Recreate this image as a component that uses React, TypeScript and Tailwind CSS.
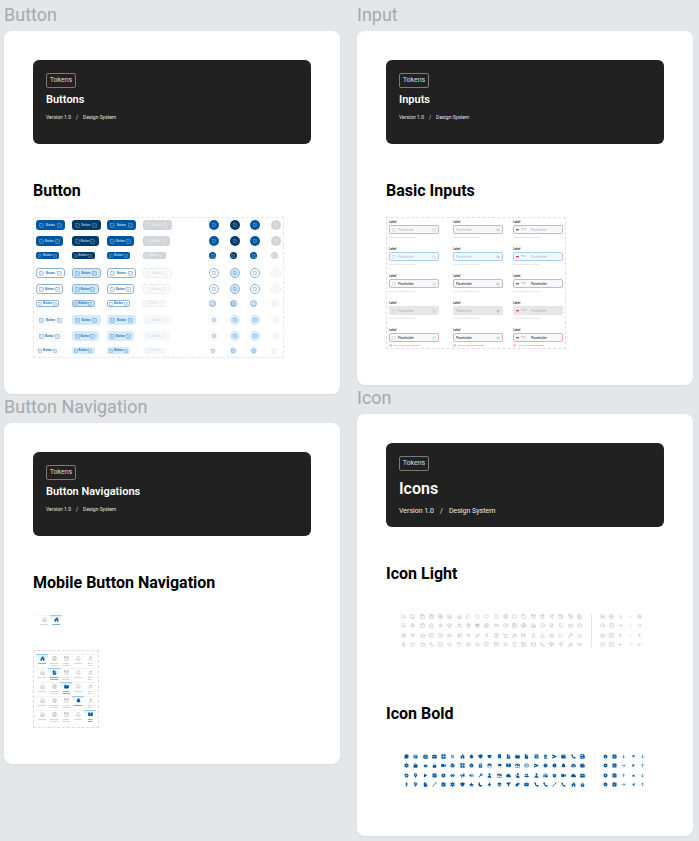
import type { ReactNode } from "react";
import {
  Activity, AlarmClock, Archive, ArrowDown, ArrowLeft, ArrowRight, ArrowUp, Award, Bell, BellRing, Bookmark, Box,
  Briefcase, Calendar, Camera, ChevronDown, ChevronLeft, ChevronRight, ChevronUp, CircleCheck, CircleMinus,
  CirclePlus, CircleX, Clipboard, Clock, Cloud, Compass, CreditCard, Download, Eye, FileText, Filter, Folder, Gift,
  Globe, Grid2x2, Heart, House, Image, Info, Key, Layers, Lock, Mail, MapPin, Megaphone, Menu, MessageCircle, Mic,
  Monitor, Moon, Package, Paperclip, Pencil, Phone, PhoneCall, Play, Printer, Save, Search, Send, Settings, Shield,
  ShoppingBag, ShoppingCart, SlidersHorizontal, Smile, SquareCheck, SquareMinus, SquarePlus, SquareSlash, SquareX,
  Star, Sun, Tag, Ticket, Trash2, Truck, Upload, User, UserPlus, Users, Video, Volume2, Wallet, Wifi, Zap,
  type LucideIcon,
} from "lucide-react";
import {
  IoAlarm, IoAlertCircle, IoArchive, IoArrowDown, IoArrowForward, IoArrowUp, IoBag, IoBasket, IoBook, IoBookmark,
  IoBriefcase, IoCalendar, IoCall, IoCamera, IoCard, IoCart, IoCaretBack, IoCaretDown, IoCaretForward, IoCaretUp,
  IoChatbubble, IoCheckbox, IoCheckmarkCircle, IoCloseCircle, IoCloud, IoCompass, IoCube, IoDocument,
  IoDocumentText, IoDownload, IoEye, IoFlash, IoFolder, IoFunnel, IoGift, IoGlobe, IoGrid, IoHeart, IoHome,
  IoImage, IoInformationCircle, IoKey, IoLayers, IoLocation, IoLockClosed, IoMail, IoMegaphone, IoMic,
  IoMoon, IoNotifications, IoPause, IoPencil, IoPeople, IoPerson, IoPersonAdd, IoPlay, IoPrint, IoRemoveCircle,
  IoSave, IoSend, IoSettings, IoShield, IoStar, IoTicket, IoTime, IoTrash, IoVideocam, IoVolumeHigh, IoWallet,
} from "react-icons/io5";
import type { IconType } from "react-icons";

const lightIcons: LucideIcon[] = [
  Search, Monitor, Calendar, Briefcase, Grid2x2, Layers, House, MessageCircle, Shield, Heart, Bookmark, FileText, Folder, Clipboard, Archive, Trash2, Send, Wallet, PhoneCall, Save,
  Bell, Settings, ShoppingBag, Lock, Sun, Box, Users, Package, Gift, Printer, Video, Clock, Image, Globe, Truck, Info, Award, Bell, Camera, CircleCheck,
  Compass, MapPin, Smile, SquareCheck, CircleX, Eye, Megaphone, Wifi, Key, User, SquarePlus, ShoppingCart, UserPlus, CreditCard, Upload, Download, AlarmClock, Play, Pencil, Cloud,
  Mic, Star, Clock, Activity, SquareSlash, Zap, Tag, Ticket, Moon, BellRing, Archive, Menu, Filter, Image, Mail, Phone, Package, Send, Paperclip, Volume2,
];

const lightArrows: LucideIcon[] = [
  CirclePlus, SquarePlus, ArrowDown, ChevronDown, SlidersHorizontal,
  CircleMinus, SquareMinus, ArrowRight, ChevronRight, ArrowRight,
  CircleX, SquareX, ArrowUp, ChevronUp, ArrowUp,
  CircleCheck, SquareCheck, ArrowLeft, ChevronLeft, ArrowLeft,
];

const boldIcons: IconType[] = [
  IoChatbubble, IoCard, IoCalendar, IoBriefcase, IoGrid, IoPause, IoHome, IoNotifications, IoShield, IoHeart, IoBookmark, IoDocumentText, IoFolder, IoDocument, IoArchive, IoTrash, IoSend, IoWallet, IoCall, IoSave,
  IoSettings, IoBag, IoBasket, IoLockClosed, IoVideocam, IoCube, IoGrid, IoCheckmarkCircle, IoGift, IoPrint, IoCart, IoBook, IoImage, IoGlobe, IoSend, IoTime, IoAlertCircle, IoNotifications, IoCamera, IoWallet,
  IoCompass, IoLocation, IoPlay, IoCheckbox, IoCloseCircle, IoEye, IoMegaphone, IoVolumeHigh, IoKey, IoPerson, IoImage, IoCloud, IoPersonAdd, IoPeople, IoPerson, IoCard, IoAlarm, IoVideocam, IoCloud, IoBriefcase,
  IoMic, IoLocation, IoDocument, IoPencil, IoCheckbox, IoSettings, IoShield, IoStar, IoMoon, IoFlash, IoLayers, IoFunnel, IoTicket, IoMail, IoCall, IoCall, IoPencil, IoCall, IoHome, IoDownload,
];

const boldArrows: IconType[] = [
  IoInformationCircle, IoCheckbox, IoArrowDown, IoCaretDown, IoArrowDown,
  IoRemoveCircle, IoCheckbox, IoArrowForward, IoCaretForward, IoArrowUp,
  IoCloseCircle, IoCheckbox, IoArrowUp, IoCaretUp, IoArrowDown,
  IoCheckmarkCircle, IoCheckbox, IoArrowForward, IoCaretBack, IoArrowUp,
];

type BannerProps = { title: string; large?: boolean };

function Banner({ title, large = false }: BannerProps) {
  return (
    <header className="h-[84px] rounded-md bg-[#212121] px-[13px] pt-[13px] text-white">
      <span className="flex h-[15px] w-[30px] items-center justify-center rounded-xs border border-[#7a7a7a] text-[7px] leading-none text-[#dddddd]">
        Tokens
      </span>
      <h2 className={large ? "mt-2 text-[16px] leading-5 font-semibold" : "mt-1 text-[11px] leading-4 font-semibold"}>{title}</h2>
      <p
        className={
          large
            ? "mt-2 flex gap-[6px] text-[7px] leading-2 text-[#eeeeee]"
            : "mt-[5px] flex gap-[5px] text-[5px] leading-2 text-[#e4e4e4]"
        }
      >
        <span>Version 1.0</span>
        <span>/</span>
        <span>Design System</span>
      </p>
    </header>
  );
}

type FrameProps = BannerProps & { label: string; children: ReactNode };

function Frame({ label, title, large, children }: FrameProps) {
  return (
    <section>
      <h1 className="h-[29px] text-[18px] leading-[26px] text-[#a7a9aa]">{label}</h1>
      <div className="rounded-lg bg-white px-[29px] pt-[29px] pb-9 shadow-xs">
        <Banner title={title} large={large} />
        {children}
      </div>
    </section>
  );
}

function Heading({ children }: { children: ReactNode }) {
  return <h3 className="text-[16px] leading-5 font-bold text-black">{children}</h3>;
}

const variants = [
  {
    name: "Primary",
    spacing: "",
    states: [
      "bg-[#00569f] text-[#a9cbe9]",
      "bg-[#003a69] text-[#a3b9cc]",
      "bg-[#00569f] text-[#a9cbe9]",
      "bg-[#d1d5da] text-[#edeff1]",
    ],
  },
  {
    name: "Outline",
    spacing: "mt-[9px]",
    states: [
      "border border-[#8fb2d3] bg-white text-[#3d7db8]",
      "border border-[#8fb2d3] bg-[#d0e9ff] text-[#3d7db8]",
      "border border-[#8fb2d3] bg-white text-[#3d7db8]",
      "border border-[#eceef2] bg-[#fafbfc] text-[#e0e3e8]",
    ],
  },
  {
    name: "Ghost",
    spacing: "mt-2",
    states: [
      "bg-[#f8f9fd] text-[#3d7db8]",
      "bg-[#d4ebff] text-[#3d7db8]",
      "bg-[#d4ebff] text-[#3d7db8]",
      "bg-[#f8f9fc] text-[#e2e5ea]",
    ],
  },
];

const sizes = [
  { name: "large", pill: "h-[10px] w-[29px] gap-[2px] rounded-[3px]", round: "size-[10px]", icon: "size-[5px]" },
  { name: "medium", pill: "h-[10px] w-[27px] gap-px rounded-[3px]", round: "size-[10px]", icon: "size-[5px]" },
  { name: "small", pill: "h-[7px] w-[23px] gap-px rounded-xs", round: "size-[7px]", icon: "size-1" },
];

function ButtonBoard() {
  return (
    <div className="w-fit border border-dashed border-[#e6e2f8] px-[2px] pt-[2px] pb-[3px]">
      {variants.map((variant) => (
        <div key={variant.name} className={`flex flex-col gap-[6px] ${variant.spacing}`}>
          {sizes.map((size) => (
            <div key={size.name} className="flex gap-[31px]">
              <div className="grid w-[142px] grid-cols-4">
                {variant.states.map((state, i) => (
                  <button
                    key={i}
                    type="button"
                    disabled={i === 3}
                    className={`flex items-center justify-center text-[3px] leading-none font-bold ${size.pill} ${state}`}
                  >
                    <SquareSlash className={`shrink-0 ${size.icon}`} />
                    Button
                    <SquareSlash className={`shrink-0 ${size.icon}`} />
                  </button>
                ))}
              </div>
              <div className="grid w-[72px] grid-cols-[repeat(3,1fr)_10px]">
                {variant.states.map((state, i) => (
                  <button
                    key={i}
                    type="button"
                    disabled={i === 3}
                    aria-label={`${variant.name} ${size.name} icon button`}
                    className={`flex items-center justify-center rounded-full ${size.round} ${state}`}
                  >
                    <SquareSlash className="size-1 shrink-0" />
                  </button>
                ))}
              </div>
            </div>
          ))}
        </div>
      ))}
    </div>
  );
}

const inputStates = [
  { name: "default", box: "border-[#bdbdbf] bg-[#f7f8fc]", text: "placeholder:text-[#b5b5b8]", help: "text-[#b9b9bb]" },
  { name: "focus", box: "border-[#a6cfef] bg-[#f3f8ff]", text: "placeholder:text-[#b5bcc6]", help: "text-[#b9b9bb]" },
  { name: "filled", box: "border-[#bdbdbf] bg-[#f7f8fc]", text: "placeholder:text-[#222222]", help: "text-[#b9b9bb]" },
  { name: "disabled", box: "border-[#e3e3e3] bg-[#e7e7e7]", text: "placeholder:text-[#b3b3b3]", help: "text-[#b9b9bb]" },
  { name: "error", box: "border-[#f0a9b4] bg-[#f7f8fc]", text: "placeholder:text-[#222222]", help: "text-[#dd4a5c]" },
];

function InputBoard() {
  return (
    <div className="flex w-fit flex-col gap-[7px] border border-dashed border-[#e4daf8] px-[2px] pt-[2px]">
      {inputStates.map((state) => (
        <div key={state.name} className="grid grid-cols-[64px_60px_50px]">
          {["icons", "plain", "phone"].map((kind) => {
            const id = `${state.name}-${kind}`;
            return (
              <div key={kind} className="w-[50px]">
                <label htmlFor={id} className="block h-[5px] text-[3px] leading-[5px] font-medium text-[#222222]">
                  Label
                </label>
                <div className={`flex h-[9px] items-center gap-[2px] rounded-xs border px-[2px] ${state.box}`}>
                  {kind === "icons" && <SquareSlash className="size-1 shrink-0 text-[#c2c2c5]" />}
                  {kind === "phone" && (
                    <>
                      <span className="h-[2px] w-[3px] shrink-0 border-t border-[#e0404c] bg-[#f3b6bb]" />
                      <select aria-label="Country code" className="w-[8px] shrink-0 appearance-none text-[3px] leading-none text-[#a5a5a8]">
                        <option>+62</option>
                      </select>
                    </>
                  )}
                  <input
                    id={id}
                    placeholder="Placeholder"
                    disabled={state.name === "disabled"}
                    className={`h-1 w-0 min-w-0 flex-1 bg-transparent text-[3px] leading-1 outline-none ${state.text}`}
                  />
                  {kind === "icons" && <Smile className="size-1 shrink-0 text-[#c2c2c5]" />}
                  {kind === "plain" && <Eye className="size-1 shrink-0 text-[#a8a8ab]" />}
                </div>
                <p className={`flex h-[6px] items-center gap-[2px] text-[2px] leading-none whitespace-nowrap ${state.help}`}>
                  {state.name === "error" && <Info className="size-[3px] shrink-0" />}
                  This is a hint text to help user.
                </p>
              </div>
            );
          })}
        </div>
      ))}
    </div>
  );
}

const tabs = [
  { label: "Beranda", icon: House, active: IoHome },
  { label: "Dokumen Layanan", icon: FileText, active: IoDocumentText },
  { label: "Produk Layanan", icon: Archive, active: IoFolder },
  { label: "Notifikasi", icon: Bell, active: IoNotifications },
  { label: "Akun Saya", icon: User, active: IoBook },
];

function NavItem({ index, active }: { index: number; active: boolean }) {
  const tab = tabs[index];
  const Icon = tab.icon;
  const ActiveIcon = tab.active;
  return (
    <a
      href="#"
      className={`flex h-3 w-3 flex-col items-center border-t pt-px text-center text-[2px] leading-[2px] ${
        active ? "border-[#a3c7e6] bg-linear-to-b from-[#e2effa] to-white to-50% font-bold text-[#0059a5]" : "border-[#f2f3f5] text-[#9c9ea1]"
      }`}
    >
      {active ? <ActiveIcon className="size-[5px] shrink-0" /> : <Icon className="size-[5px] shrink-0" />}
      <span className="mt-px w-[9px]">{tab.label}</span>
    </a>
  );
}

function NavBoard() {
  return (
    <div className="w-fit border border-dashed border-[#e6d4f5] px-[2px] pt-[3px] pb-[5px]">
      <div className="flex flex-col gap-[2px]">
        {tabs.map((row, r) => (
          <nav key={row.label} aria-label={row.label} className="flex">
            {tabs.map((tab, i) => (
              <NavItem key={tab.label} index={i} active={i === r} />
            ))}
          </nav>
        ))}
      </div>
    </div>
  );
}

type IconSheetProps = { icons: (LucideIcon | IconType)[]; arrows: (LucideIcon | IconType)[]; tone: string; rule: string };

function IconSheet({ icons, arrows, tone, rule }: IconSheetProps) {
  return (
    <div className={`flex ${tone}`}>
      <div className="grid h-[37px] w-[185px] grid-cols-20 place-items-center">
        {icons.map((Icon, i) => (
          <Icon key={i} className="size-[5px]" />
        ))}
      </div>
      <div className={`my-[2px] mr-[6px] ml-[7px] w-px ${rule}`} />
      <div className="grid h-[37px] w-[46px] grid-cols-5 place-items-center">
        {arrows.map((Icon, i) => (
          <Icon key={i} className="size-[5px]" />
        ))}
      </div>
    </div>
  );
}

export default function App() {
  return (
    <main className="min-h-screen bg-[#e3e7ea] pt-[2px] pr-[6px] pb-1 pl-1 font-[Roboto,'Liberation_Sans',sans-serif]">
      <div className="grid grid-cols-2 items-start gap-[17px]">
        <div>
          <Frame label="Button" title="Buttons">
            <div className="mt-[37px] mb-4">
              <Heading>Button</Heading>
            </div>
            <ButtonBoard />
          </Frame>
          <Frame label="Button Navigation" title="Button Navigations">
            <div className="mt-[37px] mb-[22px]">
              <Heading>Mobile Button Navigation</Heading>
            </div>
            <div className="mb-[23px] ml-[5px] flex">
              <NavItem index={0} active={false} />
              <NavItem index={0} active />
            </div>
            <NavBoard />
          </Frame>
        </div>
        <div>
          <Frame label="Input" title="Inputs">
            <div className="mt-[37px] mb-4">
              <Heading>Basic Inputs</Heading>
            </div>
            <InputBoard />
          </Frame>
          <Frame label="Icon" title="Icons" large>
            <div className="mt-[37px] mb-7">
              <Heading>Icon Light</Heading>
            </div>
            <div className="pl-[13px]">
              <IconSheet icons={lightIcons} arrows={lightArrows} tone="text-[#b2b2b2]" rule="bg-[#e6e6e6]" />
            </div>
            <div className="mt-[55px] mb-7">
              <Heading>Icon Bold</Heading>
            </div>
            <div className="pb-[11px] pl-4">
              <IconSheet icons={boldIcons} arrows={boldArrows} tone="text-[#0059a5]" rule="bg-[#f6f6f6]" />
            </div>
          </Frame>
        </div>
      </div>
    </main>
  );
}
